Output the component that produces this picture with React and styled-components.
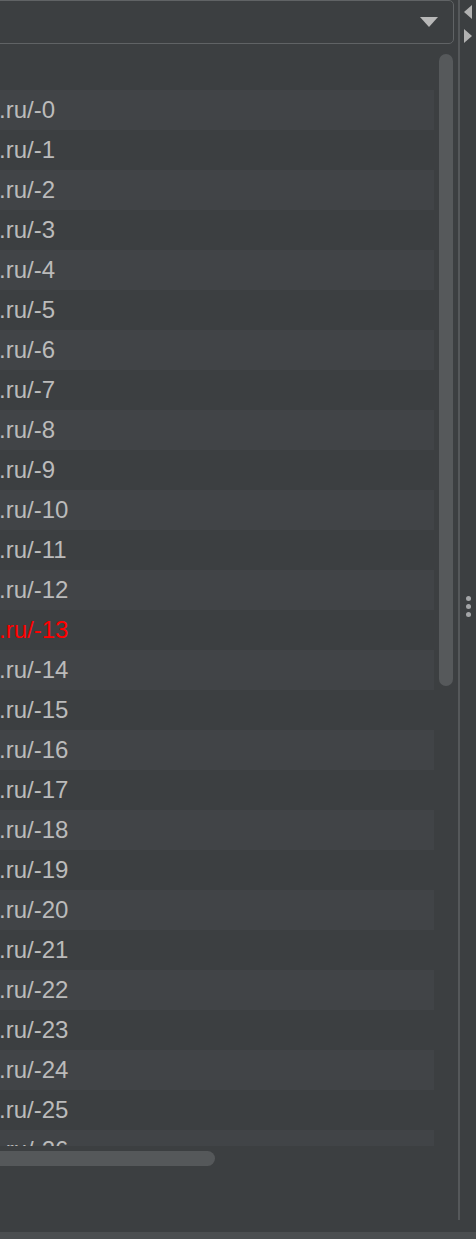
import styled, { createGlobalStyle } from 'styled-components'

const GlobalStyle = createGlobalStyle`
    html, body {
        margin: 0;
        padding: 0;
        background-color: #3c3f41;
        overflow: hidden;
    }
    body {
        font-family: "Liberation Sans", Arial, sans-serif;
    }
`

const Page = styled.div`
    width: 476px;
    height: 1239px;
    display: flex;
    flex-direction: column;
    background-color: #3c3f41;
    overflow: hidden;
`
const Body = styled.div`
    flex: 1;
    display: flex;
`
const MainColumn = styled.div`
    width: 458px;
    display: flex;
    flex-direction: column;
`
const Divider = styled.div`
    width: 2px;
    height: 1220px;
    background-color: #55585a;
`
const SideStrip = styled.div`
    flex: 1;
    display: flex;
    flex-direction: column;
    align-items: center;
    padding-top: 5px;
`
const Arrow = styled.div`
    width: 0;
    height: 0;
    border-top: 7px solid transparent;
    border-bottom: 7px solid transparent;
    ${p => p.$dir === 'left'
        ? 'border-right: 8px solid #b2b2b2; margin-bottom: 10px;'
        : 'border-left: 8px solid #b2b2b2;'}
`
const Dots = styled.div`
    margin-top: 553px;
    display: flex;
    flex-direction: column;
    gap: 3px;
`
const Dot = styled.span`
    width: 5px;
    height: 5px;
    border-radius: 50%;
    background-color: #a4a6a8;
`
const Dropdown = styled.div`
    height: 42px;
    margin-left: -12px;
    margin-right: 4px;
    border: 1.5px solid #606365;
    border-radius: 5px;
    display: flex;
    align-items: center;
    justify-content: flex-end;
    padding-right: 15px;
`
const Caret = styled.div`
    width: 0;
    height: 0;
    border-left: 9px solid transparent;
    border-right: 9px solid transparent;
    border-top: 10px solid #b8b8b8;
`
const ListArea = styled.div`
    display: flex;
    margin-top: 6px;
`
const List = styled.div`
    width: 434px;
    height: 1096px;
    overflow: hidden;
`
const Row = styled.div`
    height: 40px;
    display: flex;
    align-items: center;
    white-space: nowrap;
    font-size: 24px;
    margin-left: -1px;
    color: ${p => (p.$error ? '#ff0000' : '#bbbbbb')};
    background-color: ${p => (p.$alt ? '#414447' : '#3c3f41')};
`
const VTrack = styled.div`
    width: 14px;
    margin-left: 5px;
    padding-top: 4px;
`
const VThumb = styled.div`
    height: 632px;
    border-radius: 7px;
    background-color: #56595b;
`
const HThumb = styled.div`
    width: 227px;
    height: 15px;
    margin-top: 5px;
    margin-left: -12px;
    border-radius: 8px;
    background-color: #55585a;
`
const BottomStrip = styled.div`
    height: 7px;
    background-color: #4b4e50;
`

const rows = Array.from({ length: 27 }, (_, i) => i)

const App = () => {
  return (
    <Page>
        <GlobalStyle/>
        <Body>
            <MainColumn>
                <Dropdown>
                    <Caret/>
                </Dropdown>
                <ListArea>
                    <List>
                        <Row/>
                        {rows.map(i => (
                            <Row key={i} $alt={i % 2 === 0} $error={i === 13}>.ru/-{i}</Row>
                        ))}
                    </List>
                    <VTrack>
                        <VThumb/>
                    </VTrack>
                </ListArea>
                <HThumb/>
            </MainColumn>
            <Divider/>
            <SideStrip>
                <Arrow $dir="left"/>
                <Arrow $dir="right"/>
                <Dots>
                    <Dot/>
                    <Dot/>
                    <Dot/>
                </Dots>
            </SideStrip>
        </Body>
        <BottomStrip/>
    </Page>
  )
}

export default App
